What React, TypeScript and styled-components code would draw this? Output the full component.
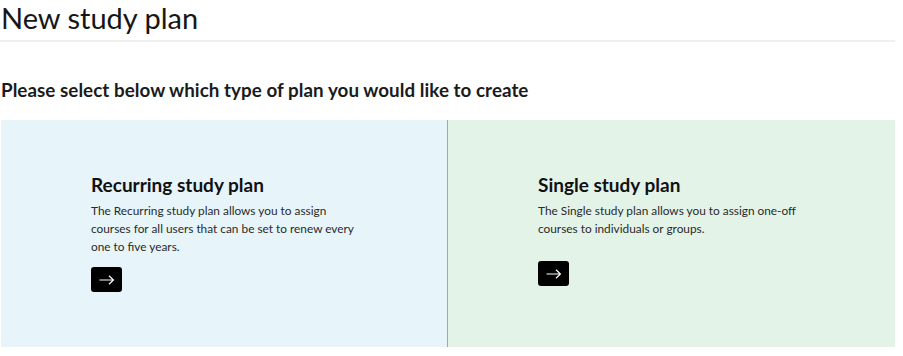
import React from "react";
import styled, { createGlobalStyle } from "styled-components";

const GlobalStyle = createGlobalStyle`
  html, body {
    margin: 0;
    padding: 0;
    background: #ffffff;
  }
  body {
    font-family: "Lato", "Open Sans", sans-serif;
    color: #1b1b1b;
  }
`

const Page = styled.div`
  width: 895px;
  display: flex;
  flex-direction: column;
`

const Header = styled.header`
  border-bottom: 2px solid #f0f0f0;
  height: 42px;
  box-sizing: border-box;
`

const PageTitle = styled.h1`
  margin: 0;
  padding-left: 1px;
  font-size: 29px;
  font-weight: 400;
  line-height: 36px;
  color: #161616;
`

const Lead = styled.h2`
  margin: 36px 0 18px 1px;
  font-size: 18.8px;
  font-weight: 700;
  line-height: 24px;
  letter-spacing: 0.05px;
  color: #1b1b1b;
`

const Options = styled.div`
  display: grid;
  grid-template-columns: 446px 1fr;
  height: 227px;
  padding-left: 1px;
`

const Option = styled.section<{ tone: "blue" | "green" }>`
  background: ${(p) => (p.tone === "blue" ? "#e7f4fa" : "#e3f3e8")};
  border-left: ${(p) => (p.tone === "green" ? "1px solid #9aa9b0" : "none")};
  padding: 53px 0 0 90px;
  display: flex;
  flex-direction: column;
  align-items: flex-start;
`

const OptionTitle = styled.h3`
  margin: 0 0 5px 0;
  font-size: 19px;
  font-weight: 700;
  line-height: 24px;
  color: #111;
`

const OptionText = styled.p<{ gap: number }>`
  margin: 0 0 ${(p) => p.gap}px 0;
  width: 270px;
  font-size: 11.85px;
  line-height: 18px;
  color: #2a2a2a;
`

const GoButton = styled.button`
  width: 31px;
  height: 25px;
  border: none;
  border-radius: 3px;
  background: #000;
  color: #fff;
  display: flex;
  align-items: center;
  justify-content: center;
  padding: 0;
  cursor: pointer;
`

const Arrow = () => (
  <svg width="16" height="10" viewBox="0 0 16 10" fill="none">
    <path d="M0.5 5h14M10 0.8l4.4 4.2L10 9.2" stroke="#fff" strokeWidth="1.2" />
  </svg>
)

const plans = [
  {
    tone: "blue" as const,
    title: "Recurring study plan",
    text: "The Recurring study plan allows you to assign courses for all users that can be set to renew every one to five years.",
    gap: 11,
  },
  {
    tone: "green" as const,
    title: "Single study plan",
    text: "The Single study plan allows you to assign one-off courses to individuals or groups.",
    gap: 23,
  },
]

export default function App() {
  return (
    <>
      <GlobalStyle />
      <Page>
        <Header>
          <PageTitle>New study plan</PageTitle>
        </Header>
        <Lead>Please select below which type of plan you would like to create</Lead>
        <Options>
          {plans.map((plan) => (
            <Option key={plan.title} tone={plan.tone}>
              <OptionTitle>{plan.title}</OptionTitle>
              <OptionText gap={plan.gap}>{plan.text}</OptionText>
              <GoButton aria-label={plan.title}>
                <Arrow />
              </GoButton>
            </Option>
          ))}
        </Options>
      </Page>
    </>
  )
}
